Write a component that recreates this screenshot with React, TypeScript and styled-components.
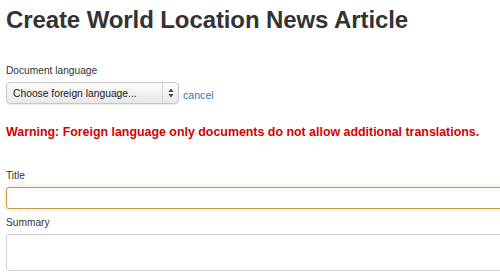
import styled, { createGlobalStyle } from 'styled-components';

const GlobalStyle = createGlobalStyle`
  html, body {
    margin: 0;
    padding: 0;
    background: #fff;
    overflow: hidden;
  }
  body {
    font-family: "Liberation Sans", Arial, Helvetica, sans-serif;
    color: #333;
  }
`;

const Page = styled.div`
  padding: 6px 0 0 6px;
  width: 520px;
`;

const Heading = styled.h1`
  margin: 0 0 30px;
  font-size: 24px;
  line-height: 28px;
  font-weight: bold;
  color: #333;
  letter-spacing: -0.1px;
`;

const Label = styled.label`
  display: block;
  font-size: 10.2px;
  line-height: 14px;
  color: #333;
  margin-bottom: 4px;
`;

const LanguageRow = styled.div`
  display: flex;
  align-items: flex-end;
  gap: 4px;
`;

const SelectBox = styled.div`
  display: flex;
  align-items: center;
  width: 173px;
  height: 22px;
  box-sizing: border-box;
  border: 1px solid #c6c6c6;
  border-radius: 4px;
  background: linear-gradient(#fbfbfb, #e8e8e8);
  box-shadow: 0 1px 1px rgba(0, 0, 0, 0.08);
  font-size: 10.3px;
  color: #222;
`;

const SelectText = styled.span`
  flex: 1;
  padding-left: 6px;
`;

const Arrows = styled.span`
  width: 15px;
  height: 100%;
  border-left: 1px solid #d4d4d4;
  display: flex;
  align-items: center;
  justify-content: center;
`;

const CancelLink = styled.a`
  font-size: 10.6px;
  color: #2a7bbf;
  text-decoration: none;
  line-height: 14px;
  margin-bottom: 2px;
`;

const Warning = styled.p`
  margin: 20px 0 0;
  font-size: 12.4px;
  line-height: 16px;
  font-weight: bold;
  color: #d40000;
`;

const Field = styled.div<{ gap: number }>`
  margin-top: ${(p) => p.gap}px;
`;

const TextBox = styled.div<{ focused?: boolean; tall?: boolean }>`
  box-sizing: border-box;
  width: 520px;
  height: ${(p) => (p.tall ? '37px' : '22px')};
  border: 1px solid ${(p) => (p.focused ? '#c49a50' : '#d4d4d4')};
  border-radius: 3px;
  background: #fff;
  box-shadow: ${(p) =>
    p.focused ? '0 0 4px rgba(230, 190, 110, 0.6)' : 'inset 0 1px 1px rgba(0,0,0,0.04)'};
`;

export default function App() {
  return (
    <Page>
      <GlobalStyle />
      <Heading>Create World Location News Article</Heading>
      <Label>Document language</Label>
      <LanguageRow>
        <SelectBox>
          <SelectText>Choose foreign language...</SelectText>
          <Arrows>
            <svg width="6" height="10" viewBox="0 0 6 10">
              <path d="M3 0.5 L5.5 4 H0.5 Z" fill="#444" />
              <path d="M3 9.5 L5.5 6 H0.5 Z" fill="#444" />
            </svg>
          </Arrows>
        </SelectBox>
        <CancelLink href="#">cancel</CancelLink>
      </LanguageRow>
      <Warning>Warning: Foreign language only documents do not allow additional translations.</Warning>
      <Field gap={29}>
        <Label>Title</Label>
        <TextBox focused />
      </Field>
      <Field gap={7}>
        <Label>Summary</Label>
        <TextBox tall />
      </Field>
    </Page>
  );
}
